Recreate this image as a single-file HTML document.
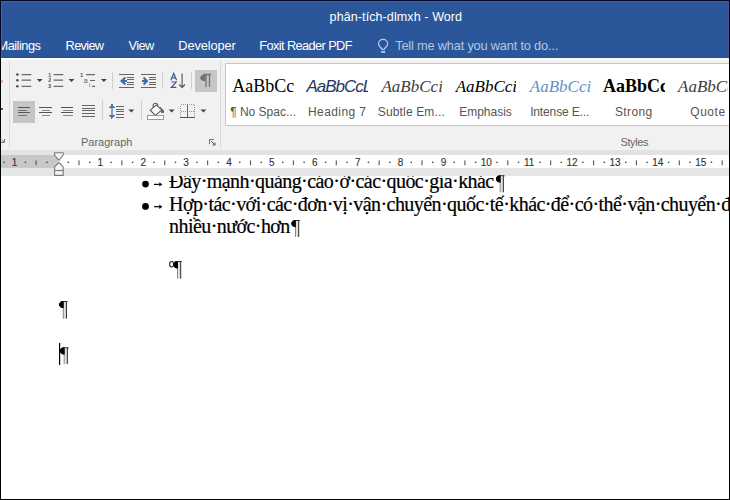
<!DOCTYPE html>
<html><head><meta charset="utf-8">
<style>
html,body{margin:0;padding:0;}
body{width:730px;height:500px;overflow:hidden;position:relative;background:#fff;font-family:"Liberation Sans",sans-serif;}
.a{position:absolute;}
.t{position:absolute;white-space:pre;line-height:1;}
#title{left:0;top:0;width:730px;height:58px;background:#2b579a;}
#ribbon{left:0;top:58px;width:730px;height:92px;background:#f1f1f1;}
.tab{color:#fff;font-size:12px;top:40px;}
.lbl{color:#666;font-size:11px;}
.sty{font-family:"Liberation Serif",serif;font-size:19px;top:76px;}
.stl{font-size:12px;color:#555;top:104px;}
.doc{font-family:"Liberation Serif",serif;font-size:20px;letter-spacing:-0.56px;color:#000;-webkit-text-stroke:0.2px #000;}
.rn{font-size:10px;color:#444;top:157px;}
svg{position:absolute;left:0;top:0;}
</style></head><body>
<div id="title" class="a"></div>
<div class="a" style="left:0;top:57px;width:730px;height:1px;background:#24508f;"></div>
<div class="t" style="left:329.6px;top:11px;color:#fff;font-size:12.5px;letter-spacing:0.1px;">phân-tích-dlmxh - Word</div>
<div class="t tab" style="left:-2.5px;font-size:12.8px;letter-spacing:-0.5px;">Mailings</div>
<div class="t tab" style="left:65.6px;font-size:12.8px;letter-spacing:-0.7px;">Review</div>
<div class="t tab" style="left:128.5px;font-size:12.8px;letter-spacing:-0.6px;">View</div>
<div class="t tab" style="left:178.3px;font-size:12.8px;letter-spacing:-0.11px;">Developer</div>
<div class="t tab" style="left:259.3px;font-size:12.8px;letter-spacing:-0.61px;">Foxit Reader PDF</div>
<div class="t tab" style="left:395.2px;font-size:12.8px;letter-spacing:-0.19px;color:#b3c6e4;">Tell me what you want to do...</div>

<svg width="730" height="500" viewBox="0 0 730 500" style="z-index:1"><path d="M381.9 49.4C381.4 47.6 378.5 46.3 378.5 43.9C378.5 41.3 380.6 39.4 383.1 39.4C385.6 39.4 387.7 41.3 387.7 43.9C387.7 46.3 384.8 47.6 384.3 49.4Z" fill="none" stroke="#bccdea" stroke-width="1.2" stroke-linejoin="round"/><rect x="381.2" y="51" width="4" height="1.8" fill="#bccdea"/></svg>
<div id="ribbon" class="a"></div>
<div class="a" style="left:0;top:58px;width:730px;height:2px;background:#fbfbfb;"></div>
<!-- paragraph group separators -->
<div class="a" style="left:9px;top:60px;width:1px;height:88px;background:#dadada;"></div>
<div class="a" style="left:220px;top:60px;width:1px;height:88px;background:#dadada;"></div>
<!-- pilcrow btn and align-left btn -->
<div class="a" style="left:195px;top:70px;width:22px;height:22px;background:#c6c6c6;"></div>
<div class="a" style="left:13px;top:101px;width:22px;height:22px;background:#c6c6c6;"></div>
<div class="t lbl" style="left:81px;top:137px;">Paragraph</div>
<div class="t lbl" style="left:620.5px;top:137px;letter-spacing:-0.4px;">Styles</div>

<!-- styles gallery -->
<div class="a" style="left:225px;top:63px;width:510px;height:61px;background:#fff;border:1px solid #c6c6c6;"></div>

<div class="a" style="left:226.00px;top:64px;width:74.15px;height:60px;overflow:hidden;"><div class="a" style="left:0;top:0;width:68px;height:40px;overflow:hidden;"><div class="t" style="left:6.3px;top:13px;font-family:'Liberation Serif',serif;font-size:18px;color:#000;">AaBbCc</div></div><div class="t" style="left:0;width:74.15px;text-align:center;top:41.5px;font-size:12px;color:#555;">¶ No Spac...</div></div>
<div class="a" style="left:300.15px;top:64px;width:74.15px;height:60px;overflow:hidden;"><div class="a" style="left:0;top:0;width:68px;height:40px;overflow:hidden;"><div class="t" style="left:6.3px;top:13px;font-family:'Liberation Sans',sans-serif;font-style:italic;font-size:17px;letter-spacing:-1px;color:#1f3763;top:13.6px;">AaBbCcL</div></div><div class="t" style="left:0;width:74.15px;text-align:center;top:41.5px;font-size:12px;color:#555;letter-spacing:0.4px;">Heading 7</div></div>
<div class="a" style="left:374.30px;top:64px;width:74.15px;height:60px;overflow:hidden;"><div class="a" style="left:0;top:0;width:68px;height:40px;overflow:hidden;"><div class="t" style="left:7.2px;top:13.8px;font-family:'Liberation Serif',serif;font-style:italic;font-size:17px;color:#404040;">AaBbCci</div></div><div class="t" style="left:0;width:74.15px;text-align:center;top:41.5px;font-size:12px;color:#555;letter-spacing:0.15px;">Subtle Em...</div></div>
<div class="a" style="left:448.45px;top:64px;width:74.15px;height:60px;overflow:hidden;"><div class="a" style="left:0;top:0;width:68px;height:40px;overflow:hidden;"><div class="t" style="left:7.2px;top:13.8px;font-family:'Liberation Serif',serif;font-style:italic;font-size:17px;color:#000;">AaBbCci</div></div><div class="t" style="left:0;width:74.15px;text-align:center;top:41.5px;font-size:12px;color:#555;">Emphasis</div></div>
<div class="a" style="left:522.60px;top:64px;width:74.15px;height:60px;overflow:hidden;"><div class="a" style="left:0;top:0;width:68px;height:40px;overflow:hidden;"><div class="t" style="left:7.2px;top:13.8px;font-family:'Liberation Serif',serif;font-style:italic;font-size:17px;color:#6690c8;">AaBbCci</div></div><div class="t" style="left:0;width:74.15px;text-align:center;top:41.5px;font-size:12px;color:#555;letter-spacing:-0.14px;">Intense E...</div></div>
<div class="a" style="left:596.75px;top:64px;width:74.15px;height:60px;overflow:hidden;"><div class="a" style="left:0;top:0;width:68px;height:40px;overflow:hidden;"><div class="t" style="left:6.3px;top:13px;font-family:'Liberation Serif',serif;font-weight:bold;font-size:18px;color:#000;">AaBbCc</div></div><div class="t" style="left:0;width:74.15px;text-align:center;top:41.5px;font-size:12px;color:#555;letter-spacing:0.4px;">Strong</div></div>
<div class="a" style="left:670.90px;top:64px;width:57.10px;height:60px;overflow:hidden;"><div class="a" style="left:0;top:0;width:68px;height:40px;overflow:hidden;"><div class="t" style="left:7.2px;top:13.8px;font-family:'Liberation Serif',serif;font-style:italic;font-size:17px;color:#404040;">AaBbCc</div></div><div class="t" style="left:0;width:74.15px;text-align:center;top:41.5px;font-size:12px;color:#555;letter-spacing:0.5px;">Quote</div></div>
<!-- ruler -->
<div class="a" style="left:0;top:150px;width:730px;height:5px;background:#e3e3e3;"></div>
<div class="a" style="left:0;top:155px;width:730px;height:13px;background:#fff;"></div>
<div class="a" style="left:0;top:155px;width:58px;height:13px;background:#c8c8c8;"></div>
<div class="a" style="left:0;top:168px;width:730px;height:8px;background:#e6e6e6;"></div>

<svg width="730" height="500" viewBox="0 0 730 500" style="z-index:1">
<rect x="3.25" y="161.6" width="1.4" height="1.4" fill="#444"/>
<text x="14.62" y="165.8" font-size="10" font-family="Liberation Sans" fill="#333" stroke="#333" stroke-width="0.12" text-anchor="middle">1</text><rect x="24.69" y="161.6" width="1.4" height="1.4" fill="#444"/><rect x="35.56" y="160.4" width="1.1" height="4.8" fill="#555"/><rect x="46.13" y="161.6" width="1.4" height="1.4" fill="#444"/>
<rect x="67.57" y="161.6" width="1.4" height="1.4" fill="#444"/><rect x="78.44" y="160.4" width="1.1" height="4.8" fill="#555"/><rect x="89.01" y="161.6" width="1.4" height="1.4" fill="#444"/>
<text x="100.38" y="165.8" font-size="10" font-family="Liberation Sans" fill="#333" stroke="#333" stroke-width="0.12" text-anchor="middle">1</text><rect x="110.45" y="161.6" width="1.4" height="1.4" fill="#444"/><rect x="121.32" y="160.4" width="1.1" height="4.8" fill="#555"/><rect x="131.89" y="161.6" width="1.4" height="1.4" fill="#444"/>
<text x="143.26" y="165.8" font-size="10" font-family="Liberation Sans" fill="#333" stroke="#333" stroke-width="0.12" text-anchor="middle">2</text><rect x="153.33" y="161.6" width="1.4" height="1.4" fill="#444"/><rect x="164.20" y="160.4" width="1.1" height="4.8" fill="#555"/><rect x="174.77" y="161.6" width="1.4" height="1.4" fill="#444"/>
<text x="186.14" y="165.8" font-size="10" font-family="Liberation Sans" fill="#333" stroke="#333" stroke-width="0.12" text-anchor="middle">3</text><rect x="196.21" y="161.6" width="1.4" height="1.4" fill="#444"/><rect x="207.08" y="160.4" width="1.1" height="4.8" fill="#555"/><rect x="217.65" y="161.6" width="1.4" height="1.4" fill="#444"/>
<text x="229.02" y="165.8" font-size="10" font-family="Liberation Sans" fill="#333" stroke="#333" stroke-width="0.12" text-anchor="middle">4</text><rect x="239.09" y="161.6" width="1.4" height="1.4" fill="#444"/><rect x="249.96" y="160.4" width="1.1" height="4.8" fill="#555"/><rect x="260.53" y="161.6" width="1.4" height="1.4" fill="#444"/>
<text x="271.90" y="165.8" font-size="10" font-family="Liberation Sans" fill="#333" stroke="#333" stroke-width="0.12" text-anchor="middle">5</text><rect x="281.97" y="161.6" width="1.4" height="1.4" fill="#444"/><rect x="292.84" y="160.4" width="1.1" height="4.8" fill="#555"/><rect x="303.41" y="161.6" width="1.4" height="1.4" fill="#444"/>
<text x="314.78" y="165.8" font-size="10" font-family="Liberation Sans" fill="#333" stroke="#333" stroke-width="0.12" text-anchor="middle">6</text><rect x="324.85" y="161.6" width="1.4" height="1.4" fill="#444"/><rect x="335.72" y="160.4" width="1.1" height="4.8" fill="#555"/><rect x="346.29" y="161.6" width="1.4" height="1.4" fill="#444"/>
<text x="357.66" y="165.8" font-size="10" font-family="Liberation Sans" fill="#333" stroke="#333" stroke-width="0.12" text-anchor="middle">7</text><rect x="367.73" y="161.6" width="1.4" height="1.4" fill="#444"/><rect x="378.60" y="160.4" width="1.1" height="4.8" fill="#555"/><rect x="389.17" y="161.6" width="1.4" height="1.4" fill="#444"/>
<text x="400.54" y="165.8" font-size="10" font-family="Liberation Sans" fill="#333" stroke="#333" stroke-width="0.12" text-anchor="middle">8</text><rect x="410.61" y="161.6" width="1.4" height="1.4" fill="#444"/><rect x="421.48" y="160.4" width="1.1" height="4.8" fill="#555"/><rect x="432.05" y="161.6" width="1.4" height="1.4" fill="#444"/>
<text x="443.42" y="165.8" font-size="10" font-family="Liberation Sans" fill="#333" stroke="#333" stroke-width="0.12" text-anchor="middle">9</text><rect x="453.49" y="161.6" width="1.4" height="1.4" fill="#444"/><rect x="464.36" y="160.4" width="1.1" height="4.8" fill="#555"/><rect x="474.93" y="161.6" width="1.4" height="1.4" fill="#444"/>
<text x="486.30" y="165.8" font-size="10" font-family="Liberation Sans" fill="#333" stroke="#333" stroke-width="0.12" text-anchor="middle">10</text><rect x="496.37" y="161.6" width="1.4" height="1.4" fill="#444"/><rect x="507.24" y="160.4" width="1.1" height="4.8" fill="#555"/><rect x="517.81" y="161.6" width="1.4" height="1.4" fill="#444"/>
<text x="529.18" y="165.8" font-size="10" font-family="Liberation Sans" fill="#333" stroke="#333" stroke-width="0.12" text-anchor="middle">11</text><rect x="539.25" y="161.6" width="1.4" height="1.4" fill="#444"/><rect x="550.12" y="160.4" width="1.1" height="4.8" fill="#555"/><rect x="560.69" y="161.6" width="1.4" height="1.4" fill="#444"/>
<text x="572.06" y="165.8" font-size="10" font-family="Liberation Sans" fill="#333" stroke="#333" stroke-width="0.12" text-anchor="middle">12</text><rect x="582.13" y="161.6" width="1.4" height="1.4" fill="#444"/><rect x="593.00" y="160.4" width="1.1" height="4.8" fill="#555"/><rect x="603.57" y="161.6" width="1.4" height="1.4" fill="#444"/>
<text x="614.94" y="165.8" font-size="10" font-family="Liberation Sans" fill="#333" stroke="#333" stroke-width="0.12" text-anchor="middle">13</text><rect x="625.01" y="161.6" width="1.4" height="1.4" fill="#444"/><rect x="635.88" y="160.4" width="1.1" height="4.8" fill="#555"/><rect x="646.45" y="161.6" width="1.4" height="1.4" fill="#444"/>
<text x="657.82" y="165.8" font-size="10" font-family="Liberation Sans" fill="#333" stroke="#333" stroke-width="0.12" text-anchor="middle">14</text><rect x="667.89" y="161.6" width="1.4" height="1.4" fill="#444"/><rect x="678.76" y="160.4" width="1.1" height="4.8" fill="#555"/><rect x="689.33" y="161.6" width="1.4" height="1.4" fill="#444"/>
<text x="700.70" y="165.8" font-size="10" font-family="Liberation Sans" fill="#333" stroke="#333" stroke-width="0.12" text-anchor="middle">15</text><rect x="710.77" y="161.6" width="1.4" height="1.4" fill="#444"/><rect x="721.64" y="160.4" width="1.1" height="4.8" fill="#555"/>

<path d="M54.6 152.7h8.6v2.3l-4.3 5.3-4.3-5.3z" fill="#f4f4f4" stroke="#7a7a7a" stroke-width="1.1" stroke-linejoin="round"/>
<path d="M58.9 162.5l4.3 4.3v8.6h-8.6v-8.6z" fill="#f4f4f4" stroke="#7a7a7a" stroke-width="1.1" stroke-linejoin="round"/>
<path d="M54.6 170.5h8.6" stroke="#7a7a7a" stroke-width="1.1"/>
</svg>
<div class="a" style="left:0;top:176px;width:730px;height:324px;overflow:hidden;"><div class="doc t" style="left:169px;top:-4.6px;">Đây·mạnh·quảng·cáo·ở·các·quốc·gia·khác</div>
<div class="doc t" style="left:169px;top:18px;">Hợp·tác·với·các·đơn·vị·vận·chuyển·quốc·tế·khác·để·có·thể·vận·chuyển·đến</div>
<div class="doc t" style="left:169px;top:40px;">nhiều·nước·hơn</div></div>

<svg width="730" height="500" viewBox="0 0 730 500" style="z-index:1">
<g fill="none" stroke-width="1" shape-rendering="crispEdges">
<!-- bullets -->
<g fill="#3c4b63" stroke="none" shape-rendering="auto"><circle cx="17.4" cy="74.6" r="1.25"/><circle cx="17.4" cy="80.2" r="1.25"/><circle cx="17.4" cy="86.3" r="1.25"/></g>
<g stroke="#6a6a6a" stroke-width="1.2" shape-rendering="auto"><path d="M21.5 74.6H31.2M21.5 80.2H31.2M21.5 86.3H31.2"/></g>
<path d="M36.70 79.10h6l-3 3z" fill="#444" stroke="none" shape-rendering="auto"/>
<!-- numbering -->
<g fill="#3a4868" font-size="5" font-weight="bold" font-family="Liberation Sans" stroke="none"><text x="48.2" y="76.8">1</text><text x="48.2" y="82.4">2</text><text x="48.2" y="88.4">3</text></g>
<g stroke="#6a6a6a" stroke-width="1.2" shape-rendering="auto"><path d="M53.6 74.6H63.2M53.6 80.2H63.2M53.6 86.3H63.2"/></g>
<path d="M68.50 79.10h6l-3 3z" fill="#444" stroke="none" shape-rendering="auto"/>
<!-- multilevel -->
<g fill="#3a4868" font-size="5" font-weight="bold" font-family="Liberation Sans" stroke="none"><text x="80.3" y="77">1</text></g>
<g fill="#5a5a5a" font-size="7" font-family="Liberation Sans" stroke="none"><text x="83.8" y="82.8">a</text><text x="89.1" y="87.2" font-size="6">i</text></g>
<g stroke="#6a6a6a" stroke-width="1.2" shape-rendering="auto"><path d="M86 74.6H95M90 80.5H95M92 86.3H95"/></g>
<path d="M100.90 79.10h6l-3 3z" fill="#444" stroke="none" shape-rendering="auto"/>
<!-- separators -->
<g stroke="#cfcfcf"><path d="M112.5 72V89M162.5 72V89M191.5 72V89M102.5 100V120M141.5 100V120"/></g>
<!-- decrease indent -->
<g stroke="#666"><path d="M119 74.5H134M127 77.5H134M127 79.5H134M127 82H134M127 84.5H134M119 87.5H134"/></g>
<path d="M125.5 77.5l-4 3.5 4 3.5M121.5 81H127" stroke="#3a6ea5" stroke-width="2" fill="none" shape-rendering="auto"/>
<!-- increase indent -->
<g stroke="#666"><path d="M141 74.5H156M149 77.5H156M149 79.5H156M149 82H156M149 84.5H156M141 87.5H156"/></g>
<path d="M142 81H147M143.5 77.5l3.5 3.5-3.5 3.5" stroke="#3a6ea5" stroke-width="2" fill="none" shape-rendering="auto"/>
</g>
</svg>
<svg width="730" height="500" viewBox="0 0 730 500" style="z-index:1">
<g fill="none" stroke-width="1" shape-rendering="crispEdges">
<!-- sort -->
<path d="M170.8 80.2L173.7 73.4L176.6 80.2M171.9 77.8H175.5" stroke="#3f5f8f" stroke-width="1.2" fill="none" shape-rendering="auto"/>
<path d="M171.3 82H176.2L171.3 87.4H176.4" stroke="#6a4a8e" stroke-width="1.2" fill="none" shape-rendering="auto"/>
<path d="M182.1 73.4V87.5M179.2 84.5l2.9 3 2.9-3" stroke="#505050" stroke-width="1.1" fill="none" shape-rendering="auto"/>
<!-- pilcrow glyph -->
<path d="M205.5 74.5V81.3C202.2 81.3 200.2 79.6 200.2 77.9C200.2 75.9 202.2 74.5 205.5 74.5Z" fill="#737373" stroke="none" shape-rendering="auto"/><path d="M203.5 74.5H211M206 74.5V87M209.5 74.5V87" stroke="#737373" stroke-width="1.3" shape-rendering="auto"/>
<!-- align left -->
<g stroke="#555"><path d="M18 107.5H30M18 112.5H30"/></g><g stroke="#777"><path d="M18 110H27M18 115H27"/></g>
<!-- center -->
<g stroke="#555"><path d="M38.5 107.5H52M38.5 112.5H52"/></g><g stroke="#888"><path d="M41.5 110H49.5M41.5 115H49.5"/></g>
<!-- right -->
<g stroke="#555"><path d="M61 107.5H72.5M61 112.5H72.5"/></g><g stroke="#888"><path d="M63 110H72.5M63 115H72.5"/></g>
<!-- justify -->
<g stroke="#666"><path d="M81.5 105.5H94.5M81.5 108.5H94.5M81.5 110.5H94.5M81.5 113.5H94.5M81.5 116H94.5"/></g>
<!-- line spacing -->
<path d="M112 105V118" stroke="#4a78a8" stroke-width="1.3" shape-rendering="auto"/>
<path d="M109.2 107.6l2.8-3.8 2.8 3.8zM109.2 115.4l2.8 3.8 2.8-3.8z" fill="#4a78a8" stroke="none"/>
<g stroke="#666"><path d="M115.5 106.5H124M115.5 109.5H124M115.5 111.5H124M115.5 114.5H124M115.5 117.5H124"/></g>
<path d="M128.30 109.60h6l-3 3z" fill="#444" stroke="none" shape-rendering="auto"/>
<!-- shading -->
<path d="M150.3 110.2L156.4 105.1L161.9 109.8L155.3 115.3Z" fill="#fff" stroke="#555" stroke-width="1.1" shape-rendering="auto"/>
<path d="M153.3 107.5C152.6 105.2 153.6 103.2 155.3 103.2C156.8 103.2 157.7 104.3 157.9 105.6" stroke="#555" stroke-width="1.1" shape-rendering="auto"/>
<path d="M160.3 106.6C162 107.8 164.2 110.3 164 112.2C163.8 113.6 162.1 113.8 161.4 112.7C160.8 111.7 161.2 109.2 160.3 106.6Z" fill="#3f72a8" stroke="none"/>
<rect x="147.5" y="115.5" width="16" height="3.5" fill="#fff" stroke="#999"/>
<path d="M168.60 109.60h6l-3 3z" fill="#444" stroke="none" shape-rendering="auto"/>
<!-- borders -->
<rect x="180.5" y="104.5" width="14" height="13" stroke="#999" stroke-dasharray="1 1"/>
<path d="M180.5 111H194.5" stroke="#999" stroke-dasharray="1 1"/>
<path d="M187.5 104.5V117.5" stroke="#666"/>
<path d="M180 117.5H195" stroke="#555"/>
<path d="M200.40 109.60h6l-3 3z" fill="#444" stroke="none" shape-rendering="auto"/>
<!-- dialog launcher -->
<path d="M209.5 144V139.5H214" stroke="#777"/>
<path d="M211 141l4 4M215 142.5V145H212.5" stroke="#555" shape-rendering="auto"/>
</g>
</svg>
<svg width="730" height="500" viewBox="0 0 730 500" style="z-index:1">
<circle cx="145.5" cy="184.1" r="3.4" fill="#000"/><path d="M154 184.40H160" stroke="#000" stroke-width="1.2"/><path d="M159.3 182.20L162.4 184.40L159.3 186.60z" fill="#000"/>
<circle cx="145.5" cy="206.4" r="3.4" fill="#000"/><path d="M154 206.70H160" stroke="#000" stroke-width="1.2"/><path d="M159.3 204.50L162.4 206.70L159.3 208.90z" fill="#000"/>
<path d="M295.90 220.00V227.20C292.80 227.20 291.30 225.50 291.30 223.60C291.30 221.50 293.10 220.00 295.90 220.00z" fill="#000"/><rect x="294.90" y="220.00" width="4.90" height="1.1" fill="#222"/><rect x="295.00" y="220.00" width="1.1" height="17.00" fill="#8a8a8a"/><rect x="296.10" y="221.00" width="2" height="16.00" fill="#e0e0e0"/><rect x="298.10" y="220.00" width="1.1" height="17.00" fill="#3a3a3a"/><path d="M295.90 220.00V227.20C292.80 227.20 291.30 225.50 291.30 223.60C291.30 221.50 293.10 220.00 295.90 220.00z" fill="#000"/>
<path d="M500.60 175.30V182.50C497.50 182.50 496.00 180.80 496.00 178.90C496.00 176.80 497.80 175.30 500.60 175.30z" fill="#000"/><rect x="499.60" y="175.30" width="4.90" height="1.1" fill="#222"/><rect x="499.70" y="175.30" width="1.1" height="17.00" fill="#8a8a8a"/><rect x="500.80" y="176.30" width="2" height="16.00" fill="#e0e0e0"/><rect x="502.80" y="175.30" width="1.1" height="17.00" fill="#3a3a3a"/><path d="M500.60 175.30V182.50C497.50 182.50 496.00 180.80 496.00 178.90C496.00 176.80 497.80 175.30 500.60 175.30z" fill="#000"/>
<ellipse cx="171.6" cy="264.2" rx="2.0" ry="2.75" fill="none" stroke="#222" stroke-width="1.1"/><path d="M178 261.3V268.5C175.2 268.5 173.6 267 173.6 264.9C173.6 262.8 175.2 261.3 178 261.3z" fill="#000"/><rect x="174.5" y="261" width="7.3" height="1.1" fill="#333"/><rect x="177" y="261" width="1.1" height="17.6" fill="#8a8a8a"/><rect x="178.1" y="262" width="2" height="16.6" fill="#e0e0e0"/><rect x="180.1" y="261" width="1.1" height="17.6" fill="#3a3a3a"/><path d="M178 261.3V268.5C175.2 268.5 173.6 267 173.6 264.9C173.6 262.8 175.2 261.3 178 261.3z" fill="#000"/>
<path d="M63.70 301.00V308.20C60.60 308.20 59.10 306.50 59.10 304.60C59.10 302.50 60.90 301.00 63.70 301.00z" fill="#000"/><rect x="62.70" y="301.00" width="4.90" height="1.1" fill="#222"/><rect x="62.80" y="301.00" width="1.1" height="17.70" fill="#8a8a8a"/><rect x="63.90" y="302.00" width="2" height="16.70" fill="#e0e0e0"/><rect x="65.90" y="301.00" width="1.1" height="17.70" fill="#3a3a3a"/><path d="M63.70 301.00V308.20C60.60 308.20 59.10 306.50 59.10 304.60C59.10 302.50 60.90 301.00 63.70 301.00z" fill="#000"/>
<path d="M64.60 347.30V354.50C61.50 354.50 60.00 352.80 60.00 350.90C60.00 348.80 61.80 347.30 64.60 347.30z" fill="#000"/><rect x="63.60" y="347.30" width="4.90" height="1.1" fill="#222"/><rect x="63.70" y="347.30" width="1.1" height="16.80" fill="#8a8a8a"/><rect x="64.80" y="348.30" width="2" height="15.80" fill="#e0e0e0"/><rect x="66.80" y="347.30" width="1.1" height="16.80" fill="#3a3a3a"/><path d="M64.60 347.30V354.50C61.50 354.50 60.00 352.80 60.00 350.90C60.00 348.80 61.80 347.30 64.60 347.30z" fill="#000"/>
<rect x="59" y="343" width="1.2" height="22" fill="#000"/>
</svg>
<div class="a" style="left:1px;top:80px;width:2px;height:3px;background:#e8b0b0;"></div>
<div class="a" style="left:1px;top:108px;width:2px;height:2px;background:#555;"></div>
<svg width="730" height="500" style="z-index:1"><path d="M1 142.5H4.5V139M1.5 139.5L4 142" stroke="#777" fill="none" stroke-width="1"/></svg>
<!-- frame -->
<div class="a" style="left:1px;top:1px;width:728px;height:1px;background:#4764a0;"></div>
<div class="a" style="left:1px;top:1px;width:1px;height:56px;background:#4764a0;"></div>
<div class="a" style="left:728px;top:1px;width:1px;height:56px;background:#44578e;"></div>
<div class="a" style="left:0;top:0;width:730px;height:1px;background:#020628;"></div>
<div class="a" style="left:0;top:0;width:1px;height:58px;background:#020628;"></div>
<div class="a" style="left:0;top:58px;width:1px;height:442px;background:#000;"></div>
<div class="a" style="left:729px;top:0;width:1px;height:58px;background:#020628;"></div>
<div class="a" style="left:729px;top:58px;width:1px;height:442px;background:#000;"></div>
<div class="a" style="left:0;top:499px;width:730px;height:1px;background:#000;"></div>
</body></html>
